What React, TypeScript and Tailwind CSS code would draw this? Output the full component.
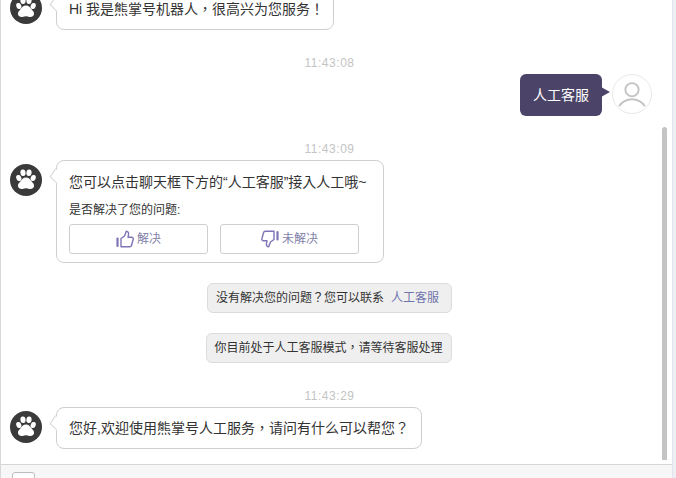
import React from "react";

const fontStack = "font-['Liberation_Sans','Noto_Sans_CJK_TC',sans-serif]";

const PawAvatar: React.FC = () => (
  <div className="w-8 h-8 shrink-0 mt-1 rounded-full bg-[#3a3a3a] flex items-center justify-center">
    <svg viewBox="0 0 32 32" className="w-8 h-8" fill="#fff">
      <ellipse cx="8.800" cy="14" rx="2.500" ry="3.100" transform="rotate(-20 8.800 14)" />
      <ellipse cx="13" cy="8.800" rx="2.600" ry="3.200" transform="rotate(-6 13 8.800)" />
      <ellipse cx="19" cy="8.800" rx="2.600" ry="3.200" transform="rotate(6 19 8.800)" />
      <ellipse cx="23.200" cy="14" rx="2.500" ry="3.100" transform="rotate(20 23.200 14)" />
      <path d="M16 13.500c2.800 0 4.200 2 5.500 3.800 1.300 1.600 2.900 2.800 2.500 5-.4 2.100-2.500 3-4.500 2.600-1.200-.2-2.300-.6-3.500-.6s-2.300.4-3.500.6c-2 .4-4.100-.5-4.500-2.600-.4-2.200 1.200-3.400 2.500-5 1.300-1.800 2.700-3.800 5.500-3.800z" />
    </svg>
  </div>
);

const UserAvatar: React.FC = () => (
  <div className="w-10 h-10 shrink-0 rounded-full border border-[#e8e8e8] bg-white flex items-center justify-center">
    <svg viewBox="0 0 40 40" className="w-10 h-10" fill="none" stroke="#c4c4c4" strokeWidth="2">
      <circle cx="20" cy="15.500" r="7" />
      <path d="M6.500 33c3-5 8-7.500 13.500-7.500s10.500 2.500 13.500 7.500" />
    </svg>
  </div>
);

const TimeStamp: React.FC<{ time: string; className?: string }> = ({ time, className }) => (
  <div className={`h-4 mr-[14px] flex items-center justify-center text-[12px] text-[#c4c4c4] tracking-[0.55px] ${className ?? ""}`}>{time}</div>
);

const BotBubble: React.FC<{ className?: string; children: React.ReactNode }> = ({ className, children }) => (
  <div className={`relative bg-white border border-[#cfcfcf] rounded-lg ${className ?? ""}`}>
    <span className="absolute left-[-6px] top-[10px] w-[10px] h-[10px] rotate-45 skew-x-[12deg] bg-white border-l border-b border-[#d4d4d4]" />
    <div className="relative">{children}</div>
  </div>
);

const BotRow: React.FC<{ className?: string; bubbleClass?: string; children: React.ReactNode }> = ({ className, bubbleClass, children }) => (
  <div className={`flex gap-[14px] pl-[9px] ${className ?? ""}`}>
    <PawAvatar />
    <BotBubble className={bubbleClass}>{children}</BotBubble>
  </div>
);

const ThumbUp: React.FC = () => (
  <svg viewBox="0 0 18 18" className="w-[18px] h-[18px]" fill="none" stroke="#7d75b5" strokeWidth="1.400" strokeLinejoin="round">
    <path d="M1.500 8.500v7.500" strokeWidth="2.200" strokeLinecap="round" />
    <path d="M5 8.500 8.500 6 10.300 1.200c1.700.2 2.500 1.500 2.200 3.100L12 7.300h3.600c1.200 0 1.900 1 1.600 2l-1.700 6.200c-.2.800-.9 1.300-1.700 1.300H5z" />
  </svg>
);

const ThumbDown: React.FC = () => (
  <svg viewBox="0 0 18 18" className="w-[18px] h-[18px]" fill="none" stroke="#7d75b5" strokeWidth="1.400" strokeLinejoin="round">
    <path d="M16.500 2v7.500" strokeWidth="2.200" strokeLinecap="round" />
    <path d="M13 1.200H4.300c-.8 0-1.500.5-1.700 1.300L.9 8.700c-.3 1 .4 2 1.600 2H6l-.5 3c-.3 1.600.5 2.900 2.200 3.100L9.500 12 13 9.500z" />
  </svg>
);

const VoteButton: React.FC<{ icon: React.ReactNode; label: string }> = ({ icon, label }) => (
  <button className="w-[139px] h-[30px] flex items-center justify-center gap-[3px] border border-[#cfcfcf] rounded-[3px] bg-white text-[12px] text-[#7f7fa8]">
    {icon}
    {label}
  </button>
);

const SystemNotice: React.FC<{ className?: string; children: React.ReactNode }> = ({ className, children }) => (
  <div className={`self-center h-[30px] flex items-center bg-[#efefef] border border-[#dcdcdc] rounded-md text-[12px] text-[#333] whitespace-nowrap ${className ?? ""}`}>
    {children}
  </div>
);

export default function App() {
  return (
    <div className={`w-[676px] h-[478px] overflow-hidden relative flex flex-col bg-white border-l border-[#d8d8d8] ${fontStack}`}>
      <div className="flex-1 min-h-0 flex flex-col mr-[4px]">
        <BotRow className="mt-[-12px]" bubbleClass="w-[278px] h-[42px] flex items-center">
          <p className="pl-3 text-[14px] text-[#333] whitespace-nowrap leading-[40px]">Hi 我是熊掌号机器人，很高兴为您服务！</p>
        </BotRow>

        <TimeStamp time="11:43:08" className="mt-[25px]" />

        <div className="mt-[3px] flex justify-end gap-[10px] pr-[20px]">
          <div className="relative w-[82px] h-[42px] bg-[#4b4468] rounded-md flex items-center justify-center text-[14px] text-white">
            人工客服
            <span className="absolute right-[-8px] top-[13px] w-0 h-0 border-y-[5px] border-y-transparent border-l-[9px] border-l-[#4b4468]" />
          </div>
          <UserAvatar />
        </div>

        <TimeStamp time="11:43:09" className="mt-[25px]" />

        <BotRow className="mt-[3px]" bubbleClass="w-[328px] h-[103px]">
          <div className="pl-3 pt-[12px] text-[#333]">
            <p className="text-[14px] leading-[18px] whitespace-nowrap">您可以点击聊天框下方的“人工客服”接入人工哦~</p>
            <p className="mt-[11px] text-[12px] leading-4 whitespace-nowrap">是否解决了您的问题:</p>
            <div className="mt-[6px] flex gap-3">
              <VoteButton icon={<ThumbUp />} label="解决" />
              <VoteButton icon={<ThumbDown />} label="未解决" />
            </div>
          </div>
        </BotRow>

        <SystemNotice className="mt-5 w-[245px] mr-[14px] px-[8px]">
          没有解决您的问题？您可以联系<span className="ml-[7px] text-[#6f74ad]">人工客服</span>
        </SystemNotice>
        <SystemNotice className="mt-5 w-[246px] mr-[16px] pl-[8px]">你目前处于人工客服模式，请等待客服处理</SystemNotice>

        <TimeStamp time="11:43:29" className="mt-[25px]" />

        <BotRow className="mt-[3px]" bubbleClass="w-[366px] h-[42px] flex items-center">
          <p className="pl-3 text-[14px] text-[#333] whitespace-nowrap">您好,欢迎使用熊掌号人工服务，请问有什么可以帮您？</p>
        </BotRow>
      </div>

      {/* footer toolbar, cut off by the window */}
      <div className="h-[14px] shrink-0 mr-[4px] bg-[#f7f7f7] border-t border-[#d6d6d6] pl-[11px] pt-[7px]">
        <div className="w-[23px] h-[14px] border border-[#bdbdbd] rounded-[3px] bg-white" />
      </div>

      {/* scrollbar */}
      <div className="absolute left-[661px] top-[127px] w-[5px] h-[333px] bg-[#c4c4c4] rounded-t-[3px]" />
      {/* window edge */}
      <div className="absolute right-0 top-0 bottom-0 w-[4px] bg-[#eeeef5] border-l border-[#e4e4ec]" />
    </div>
  );
}
